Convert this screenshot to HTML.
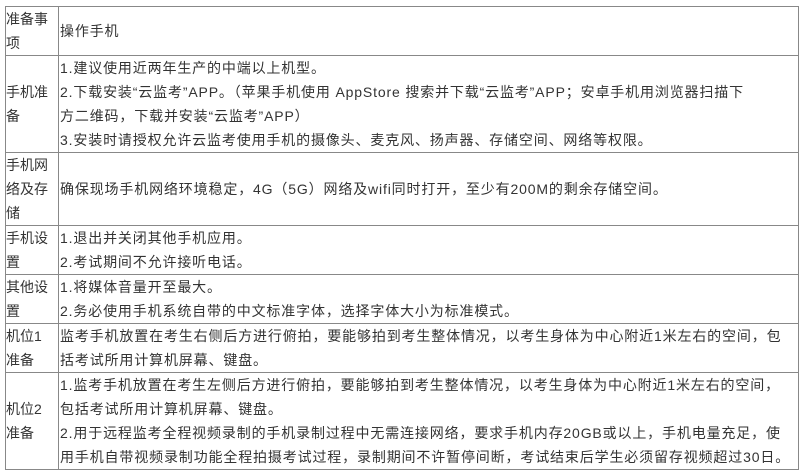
<!DOCTYPE html>
<html><head><meta charset="utf-8"><style>
html,body{margin:0;padding:0;background:#fff;width:806px;height:474px;overflow:hidden}
body{font-family:"Liberation Sans","Noto Sans CJK SC",sans-serif;font-size:14px;color:#333}
table{position:absolute;left:5px;top:6px;border-collapse:collapse;border:1px solid #333;width:794px}
td{border:1px solid #888;padding:0;line-height:24px;vertical-align:middle;white-space:nowrap;overflow:hidden}
td.a{width:52px}
td.b{padding-left:1px;letter-spacing:0.85px;max-width:738px}
</style></head><body>
<table>
<tr style="height:49px"><td class="a">准备事<br>项</td><td class="b">操作手机</td></tr>
<tr style="height:97px"><td class="a">手机准<br>备</td><td class="b">1.建议使用近两年生产的中端以上机型。<br>2.下载安装“云监考”APP。（苹果手机使用 AppStore 搜索并下载“云监考”APP；安卓手机用浏览器扫描下<br>方二维码，下载并安装“云监考”APP）<br>3.安装时请授权允许云监考使用手机的摄像头、麦克风、扬声器、存储空间、网络等权限。</td></tr>
<tr style="height:73px"><td class="a">手机网<br>络及存<br>储</td><td class="b">确保现场手机网络环境稳定，4G（5G）网络及wifi同时打开，至少有200M的剩余存储空间。</td></tr>
<tr style="height:49px"><td class="a">手机设<br>置</td><td class="b">1.退出并关闭其他手机应用。<br>2.考试期间不允许接听电话。</td></tr>
<tr style="height:49px"><td class="a">其他设<br>置</td><td class="b">1.将媒体音量开至最大。<br>2.务必使用手机系统自带的中文标准字体，选择字体大小为标准模式。</td></tr>
<tr style="height:49px"><td class="a">机位1<br>准备</td><td class="b">监考手机放置在考生右侧后方进行俯拍，要能够拍到考生整体情况，以考生身体为中心附近1米左右的空间，包<br>括考试所用计算机屏幕、键盘。</td></tr>
<tr style="height:97px"><td class="a">机位2<br>准备</td><td class="b">1.监考手机放置在考生左侧后方进行俯拍，要能够拍到考生整体情况，以考生身体为中心附近1米左右的空间，<br>包括考试所用计算机屏幕、键盘。<br>2.用于远程监考全程视频录制的手机录制过程中无需连接网络，要求手机内存20GB或以上，手机电量充足，使<br>用手机自带视频录制功能全程拍摄考试过程，录制期间不许暂停间断，考试结束后学生必须留存视频超过30日。</td></tr>
</table>
</body></html>
